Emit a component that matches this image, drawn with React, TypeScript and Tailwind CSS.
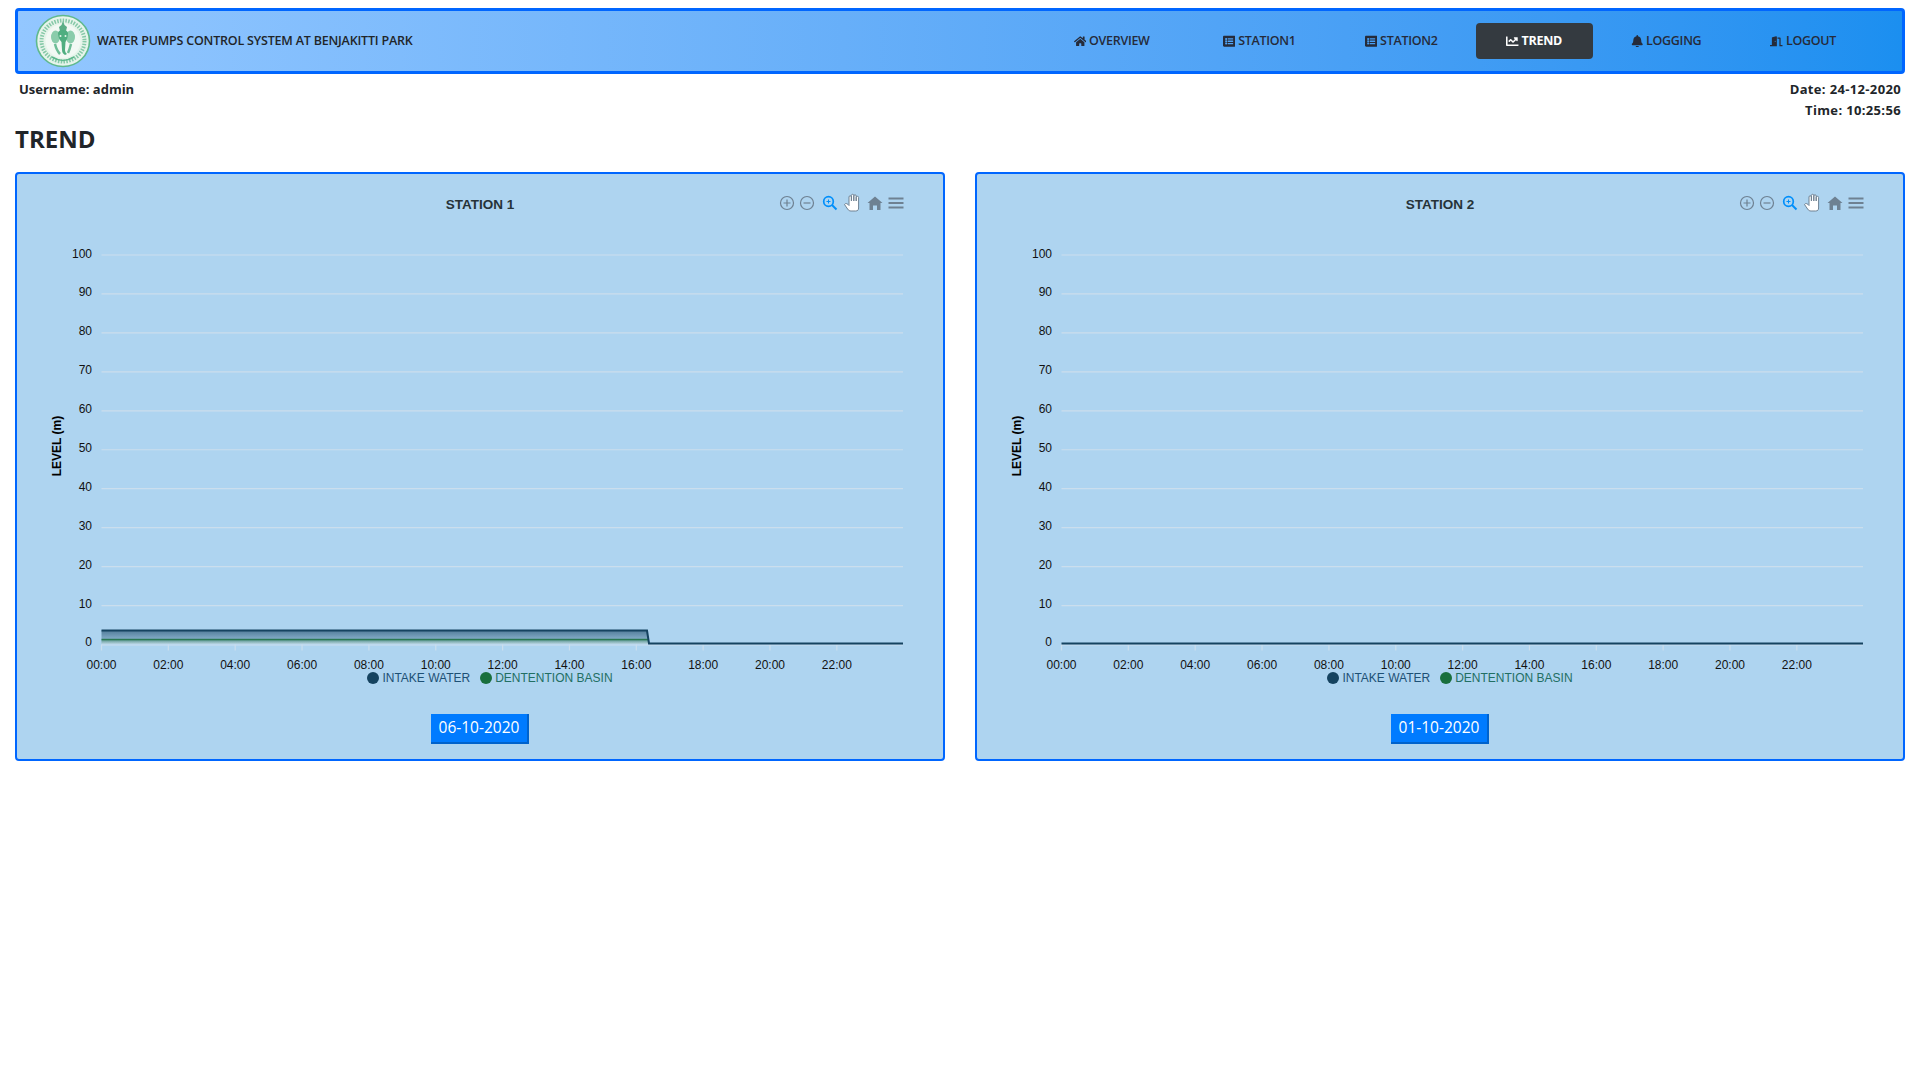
import { FaBell, FaChartLine, FaDoorOpen, FaHome, FaListAlt } from "react-icons/fa";

const navItems = [
  { label: "OVERVIEW", Icon: FaHome, extra: "mr-[4px]" },
  { label: "STATION1", Icon: FaListAlt },
  { label: "STATION2", Icon: FaListAlt },
  { label: "TREND", Icon: FaChartLine, active: true },
  { label: "LOGGING", Icon: FaBell },
  { label: "LOGOUT", Icon: FaDoorOpen },
];

const levels = [100, 90, 80, 70, 60, 50, 40, 30, 20, 10];
const hours = ["00:00", "02:00", "04:00", "06:00", "08:00", "10:00", "12:00", "14:00", "16:00", "18:00", "20:00", "22:00"];

// chart geometry, in px inside the svg
const X0 = 84.5;
const X_STEP = 66.85;
const X_END = 886;
const Y_ZERO = 470.5;
const Y_STEP = 38.95;

const Logo = () => (
  <svg width="56" height="54" viewBox="0 0 56 54" className="shrink-0">
    <ellipse cx="28" cy="27" rx="26.500" ry="25.500" fill="#e6f4ea" stroke="#5fb98d" strokeWidth="1.600" />
    <ellipse cx="28" cy="27" rx="21.500" ry="20.500" fill="none" stroke="#86c9a8" strokeWidth="4" strokeDasharray="1.500 1.300" />
    <ellipse cx="28" cy="27" rx="17.500" ry="17" fill="#f2f9f4" />
    {/* crown */}
    <path d="M28 7l1.500 4 2.500 2-1 4h-6l-1-4 2.500-2z" fill="#5aae86" />
    {/* ears */}
    <ellipse cx="20.500" cy="23" rx="4.500" ry="6.500" fill="#8accab" />
    <ellipse cx="35.500" cy="23" rx="4.500" ry="6.500" fill="#8accab" />
    {/* head and trunk */}
    <path d="M23 19c0-2 2.500-3 5-3s5 1 5 3c0 4-1 7-2.500 9l-.5 8c0 2 1 3 2 4l-2 1c-2-1-3-3-3-5l-.5-8c-2-2-3.500-5-3.500-9z" fill="#4fae80" />
    <path d="M20 30c1 4 3 8 5 10M36 30c-1 4-2 7-3 9" fill="none" stroke="#6dbd96" strokeWidth="2.500" />
    <circle cx="25.500" cy="22" r="1" fill="#e6f4ea" />
    <circle cx="30.500" cy="22" r="1" fill="#e6f4ea" />
    <path d="M17 43c4 2.500 7 3.500 11 3.500s7-1 11-3.500" fill="none" stroke="#5fb98d" strokeWidth="1.500" />
  </svg>
);

const Toolbar = () => (
  <g fill="none">
    <g stroke="#6e8192" strokeWidth="1.200">
      <circle cx="770" cy="29" r="6.500" />
      <path d="M766.500 29h7M770 25.500v7" />
      <circle cx="790" cy="29" r="6.500" />
      <path d="M786.500 29h7" />
    </g>
    <g stroke="#008ffb">
      <circle cx="811.500" cy="27.500" r="4.800" strokeWidth="1.700" />
      <path d="M815 31l4.500 4.500" strokeWidth="1.900" />
      <path d="M809.500 27.500h4M811.500 25.500v4" strokeWidth="1" />
    </g>
    <path
      d="M827.500 30.500c1-1.500 2.500-1 3.500 0l1 1V23a1.200 1.200 0 0 1 2.400 0v4v-5.500a1.200 1.200 0 0 1 2.400 0v5.500v-5a1.200 1.200 0 0 1 2.400 0v5v-3.500a1.200 1.200 0 0 1 2.400 0V34c0 2-1 3-3 3h-4.500c-1.500 0-2.500-.5-3.500-2z"
      fill="#fff"
      stroke="#6e8192"
      strokeWidth="1"
    />
    <path d="M850.500 29l7.500-6.500 7.500 6.500h-2v7h-3.500v-4.500h-4V36h-3.500v-7z" fill="#6e8192" />
    <path d="M871.500 24.500h15M871.500 29h15M871.500 33.500h15" stroke="#6e8192" strokeWidth="2" />
  </g>
);

const Chart = ({ title, hasData }: { title: string; hasData: boolean }) => {
  const gradId = "fill-" + title.replace(" ", "");
  return (
    <svg width="926" height="497" className="block" fontFamily="'Liberation Sans', sans-serif">
      <defs>
        <linearGradient id={gradId + "a"} x1="0" y1="0" x2="0" y2="1">
          <stop offset="0" stopColor="#154360" stopOpacity="0.6" />
          <stop offset="1" stopColor="#154360" stopOpacity="0.1" />
        </linearGradient>
        <linearGradient id={gradId + "b"} x1="0" y1="0" x2="0" y2="1">
          <stop offset="0" stopColor="#196f3d" stopOpacity="0.45" />
          <stop offset="1" stopColor="#d4e3e6" stopOpacity="0.5" />
        </linearGradient>
      </defs>

      <text x="463" y="35" textAnchor="middle" fontSize="13.500" fontWeight="700" fill="#263238">
        {title}
      </text>
      <Toolbar />

      {levels.map((v) => {
        const y = Y_ZERO - (v / 10) * Y_STEP;
        return (
          <g key={v}>
            <line x1={X0} x2={X_END} y1={y} y2={y} stroke="#cbdeed" strokeWidth="1.200" />
            <text x="75" y={y + 2.500} textAnchor="end" fontSize="12" fill="#111">
              {v}
            </text>
          </g>
        );
      })}
      <text x="75" y={Y_ZERO + 1.500} textAnchor="end" fontSize="12" fill="#111">
        0
      </text>
      <text
        transform="translate(44 272) rotate(-90)"
        textAnchor="middle"
        fontSize="12"
        fontWeight="700"
        fill="#000"
      >
        LEVEL (m)
      </text>

      <line x1={X0} x2={X_END} y1={Y_ZERO + 0.500} y2={Y_ZERO + 0.500} stroke="#cbdeed" strokeWidth="1.200" />
      {hours.map((h, i) => {
        const x = X0 + i * X_STEP;
        return (
          <g key={h}>
            <line x1={x} x2={x} y1={Y_ZERO} y2={Y_ZERO + 6} stroke="#cbdeed" strokeWidth="1.200" />
            <text x={x} y={Y_ZERO + 24} textAnchor="middle" fontSize="12" fill="#111">
              {h}
            </text>
          </g>
        );
      })}

      {hasData && (
        <>
          <path d="M84.500 456.500H630L632 470H84.500z" fill={`url(#${gradId}a)`} />
          <path d="M84.500 465.500H632V470H84.500z" fill={`url(#${gradId}b)`} />
          <path d="M84.500 465.500H631.500" stroke="#196f3d" strokeWidth="1.400" fill="none" opacity="0.8" />
          <path d="M84.500 456.500H630L632 469.500H886" stroke="#154360" strokeWidth="2" fill="none" />
        </>
      )}
      {!hasData && <path d="M84.500 469.500H886" stroke="#154360" strokeWidth="2" fill="none" />}
    </svg>
  );
};

const StationPanel = ({ title, date, hasData }: { title: string; date: string; hasData: boolean }) => (
  <div className="flex h-[589px] flex-col items-center rounded-[4px] border-2 border-[#0066ff] bg-[#aed4f0]">
    <Chart title={title} hasData={hasData} />
    <div className="ml-[20px] flex h-[14px] items-center gap-[10px] font-['Liberation_Sans',sans-serif] text-[12px] leading-none">
      <span className="flex items-center gap-[3px] text-[#1d5075]">
        <span className="h-[12px] w-[12px] rounded-full bg-[#154360]" />
        INTAKE WATER
      </span>
      <span className="flex items-center gap-[3px] text-[#226f63]">
        <span className="h-[12px] w-[12px] rounded-full bg-[#196f3d]" />
        DENTENTION BASIN
      </span>
    </div>
    <button className="mt-[29px] h-[30px] w-[98px] border-r-2 border-b-2 border-[#0062cc] bg-[#007bff] font-['Open_Sans',sans-serif] text-[15.500px] text-white">
      {date}
    </button>
  </div>
);

export default function App() {
  return (
    <div className="min-h-[1080px] bg-white px-[15px] pt-2 font-['Open_Sans',sans-serif] text-[#212529]">
      <nav className="flex h-[66px] items-center justify-between rounded-[4px] border-[3px] border-[#0066ff] bg-gradient-to-r from-[#93c7ff] to-[#1b8ff0] pr-[35px] pl-[17px]">
        <div className="flex items-center gap-[6px]">
          <Logo />
          <span className="text-[12.500px] font-semibold tracking-[-0.2px]">WATER PUMPS CONTROL SYSTEM AT BENJAKITTI PARK</span>
        </div>
        <ul className="flex items-center gap-[7px]">
          {navItems.map(({ label, Icon, active, extra }) => (
            <li
              key={label}
              className={clsxNav(active, extra)}
            >
              <Icon className="text-[12.500px]" />
              {label}
            </li>
          ))}
        </ul>
      </nav>

      <div className="flex justify-between px-1 pt-[5px] text-[13px] leading-[21px] font-bold">
        <span>Username: admin</span>
        <div className="text-right tracking-[0.35px]">
          <div>Date: 24-12-2020</div>
          <div>Time: 10:25:56</div>
        </div>
      </div>

      <h1 className="text-[24px] leading-[36px] font-bold">TREND</h1>

      <div className="mt-[15px] grid grid-cols-2 gap-[30px]">
        <StationPanel title="STATION 1" date="06-10-2020" hasData />
        <StationPanel title="STATION 2" date="01-10-2020" hasData={false} />
      </div>
    </div>
  );
}

function clsxNav(active?: boolean, extra?: string) {
  const base = active
    ? "flex h-[36px] w-[117px] items-center justify-center gap-[3px] rounded-[4px] bg-[#343a40] text-[12.500px] font-bold tracking-[-0.3px] text-white"
    : "flex h-[36px] items-center gap-[3px] rounded-[4px] px-[31px] text-[12.500px] font-semibold tracking-[-0.3px] text-[#252b3a]";
  return extra ? base + " " + extra : base;
}
